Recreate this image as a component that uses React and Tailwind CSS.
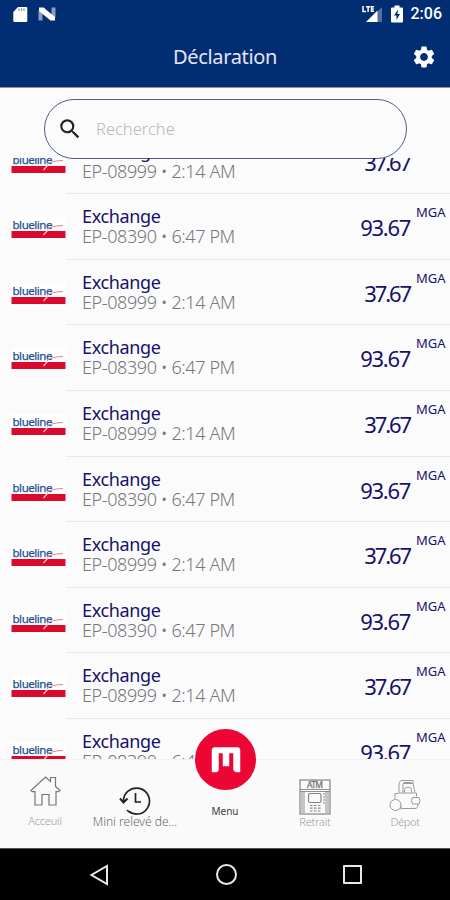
import { MdSettings, MdSearch } from "react-icons/md";

const code390 = { ref: "EP-08390 • 6:47 PM", amount: "93.67", tracking: "tracking-[-1.300px]" };
const code999 = { ref: "EP-08999 • 2:14 AM", amount: "37.67", tracking: "tracking-[-2.100px]" };

const transactions = [
  code999, code390, code999, code390, code999,
  code390, code999, code390, code999, code390,
];

function StatusBar() {
  return (
    <div className="flex h-[28px] items-center justify-between pl-[13px] pr-[8px]">
      <div className="flex items-center gap-[10px]">
        {/* SD card */}
        <svg className="h-[17px] w-[15px]" viewBox="0 0 15 17">
          <path d="M5 1h8q1.300 0 1.300 1.300v12.400q0 1.300-1.300 1.300H1.500Q0.300 16 0.300 14.700V6z" fill="#fff" />
          <path d="M6 2.500v2.500M8.500 2.500v2.500M11 2.500v2.500" stroke="#7f8fb8" strokeWidth="1.200" />
        </svg>
        <svg className="h-[14px] w-[18px]" viewBox="0 0 18 14">
          <path d="M0.500 3.500L4.500 6v7.500h-4zM13.500 0.500h4v10l-4-2.500z" fill="#8d9cc2" />
          <path d="M1 0.500h4.500L17 10v3.500h-4.500L1 4z" fill="#fff" />
        </svg>
      </div>
      <div className="flex items-center">
        <svg className="mr-[8px] h-[18px] w-[21px]" viewBox="0 0 21 18">
          <path d="M20 2v15h-5V7z" fill="#54709f" />
          <path d="M15.500 5.500V17H4z" fill="#fff" />
          <path d="M1 1v5.500h3M4 1.700h4.200M6.100 1.700v5.300M12 1.700H9.500v4.600H12M9.500 4h2.300" stroke="#fff" strokeWidth="1.500" fill="none" />
        </svg>
        <svg className="mr-[8px] h-[18px] w-[12px]" viewBox="0 0 12 18">
          <path d="M3.500 0.500h5v2h2.500q1 0 1 1V16.500q0 1-1 1H1q-1 0-1-1V3.500q0-1 1-1h2.500z" fill="#fff" />
          <path d="M7 4.500L3 10.500h2.500V15L9 9H6.500z" fill="#012d73" />
        </svg>
        <span className="font-[Roboto] text-[16px] leading-none font-medium text-white">2:06</span>
      </div>
    </div>
  );
}

function Header() {
  return (
    <header className="h-[88px] shrink-0 border-b border-[#8d94bd] bg-[#012d73]">
      <StatusBar />
      <div className="grid h-[57px] grid-cols-[60px_1fr_60px] items-center">
        <h1 className="col-start-2 text-center text-[20px] leading-none tracking-[-0.350px] text-[#e6e4f3]">Déclaration</h1>
        <MdSettings className="ml-[21px] size-[26px] text-white" />
      </div>
    </header>
  );
}

function BluelineLogo() {
  return (
    <svg className="mt-[23px] h-[22px] w-[55px] shrink-0" viewBox="0 0 55 22">
      <rect width="55" height="22" fill="#fff" />
      <text x="1.500" y="12.300" fontSize="11.500" textLength="40" fill="#24508f" stroke="#24508f" strokeWidth="0.250">
        blueline
      </text>
      <rect x="0.500" y="14" width="54" height="7" fill="#d90a2b" />
      <path d="M36 12.500Q40 8.800 52 8.500" stroke="#e4808d" strokeWidth="1" fill="none" />
      <path d="M32.500 18l4-4.500" stroke="#f7c5cc" strokeWidth="1.200" />
    </svg>
  );
}

function TransactionRow({ item }) {
  return (
    <div className="flex h-[65.600px] shrink-0 pl-[11px]">
      <BluelineLogo />
      <div className="flex flex-1 border-b border-[#e9e9eb] pl-[16px]">
        <div className="flex-1 pt-[12px]">
          <p className="text-[18px] leading-[20px] tracking-[-0.350px] text-[#17126b]">Exchange</p>
          <p className="text-[18px] leading-[20px] font-light tracking-[-0.400px] whitespace-nowrap text-[#77777c]">{item.ref}</p>
        </div>
        <span className={`pt-[21px] text-[22px] leading-[24px] text-[#17126b] ${item.tracking}`}>{item.amount}</span>
        <span className="w-[40px] pt-[10px] pl-[6px] text-[13px] leading-[16px] text-[#17126b]">MGA</span>
      </div>
    </div>
  );
}

function SearchBar() {
  return (
    <div className="mt-[11px] ml-[44px] flex h-[60px] w-[363px] shrink-0 items-center rounded-full border border-[#505a8f] bg-[#fbfbfb] pl-[12px]">
      <MdSearch className="size-[26px] text-[#222]" />
      <span className="ml-[13px] text-[16.500px] leading-none font-light text-[#b9b9bc]">Recherche</span>
    </div>
  );
}

function HomeIcon() {
  return (
    <svg className="h-[30px] w-[31px]" viewBox="0 0 31 30" fill="none" stroke="#77777a" strokeWidth="1.200">
      <path d="M1 14.500L15.500 1l5 4.500V1.500h5v9l4.500 4-1.500 1.200h-2.500V29h-7V18.500h-7V29h-7V15.700H2.300z" />
    </svg>
  );
}

function HistoryIcon() {
  return (
    <svg className="h-[30px] w-[32px]" viewBox="0 0 32 30" fill="none" stroke="#222" strokeWidth="1.700">
      <path d="M4.500 16A13 13 0 1 1 8 24M10 25.500A13 13 0 0 0 18 28" />
      <path d="M1 12.500l3.500 4 4-4" strokeWidth="2" />
      <path d="M16.500 7v9h5.500" />
    </svg>
  );
}

function AtmIcon() {
  return (
    <svg className="h-[36px] w-[32px]" viewBox="0 0 32 36" fill="none" stroke="#858588" strokeWidth="1.200">
      <rect x="1" y="1" width="30" height="34" />
      <path d="M1 10.500h30M1 12.500h30M5 12.500V34M27 12.500V34M3 12.500V34M29 12.500V34" strokeWidth="0.900" />
      <rect x="9.500" y="14.500" width="12.500" height="9" rx="1.500" />
      <path d="M24 15h2M24 18h2M24 21h2M24 24h2" />
      <path d="M11 26.500h2.500M15 26.500h2.500M19 26.500h2.500M11 29.200h2.500M15 29.200h2.500M19 29.200h2.500M11 32h2.500M15 32h2.500M19 32h2.500" />
      <text x="8" y="9.200" fontSize="8.500" textLength="16" fill="#777" stroke="#777" strokeWidth="0.300">ATM</text>
    </svg>
  );
}

function DepositIcon() {
  return (
    <svg className="h-[33px] w-[32px]" viewBox="0 0 32 33" fill="none" stroke="#9a9a9d" strokeWidth="1">
      <path d="M12 1.500h12v3h-10v9M12 1.500L10 4v9.500M14.500 3.500h8M24 4.500l2 9" />
      <path d="M15.500 13.500V10.500q0-2 2-2h3q2 0 2 2v3M9 14h18.500M6 20v-5.500h3M27.500 14v3.500" />
      <circle cx="6.500" cy="26" r="5.500" />
      <path d="M23.500 18.500h6.500l1 3-1 3.500h-6.500l-1-3.500z" />
      <path d="M12 29.500h14q3 0 3-4.500M12 26.500v4" />
    </svg>
  );
}

function MenuMark() {
  return (
    <svg className="h-[26px] w-[30px]" viewBox="0 0 30 26">
      <path
        d="M1 25V3q0-2.500 2.500-2.500h23q2.500 0 2.500 2.500v22h-4.500L22.500 23V6h-4.500v13h-6V6H7.500v17L6 25z"
        fill="#fff"
        stroke="#fff"
        strokeWidth="0.500"
      />
    </svg>
  );
}

function TabBar() {
  return (
    <nav className="relative grid h-[89px] shrink-0 grid-cols-5 border-t border-[#f2f2f3] bg-[#fafafa] text-center leading-none">
      <div className="flex flex-col items-center pt-[16px]">
        <HomeIcon />
        <span className="mt-[9px] text-[11px] font-light tracking-[-0.200px] text-[#9b9b9e]">Acceuil</span>
      </div>
      <div className="flex flex-col items-center pt-[26px]">
        <HistoryIcon />
        <span className="text-[12px] font-light whitespace-nowrap text-[#68686b]">Mini relevé de...</span>
      </div>
      <div className="flex flex-col items-center pt-[46px]">
        <span className="text-[10px] text-[#3c3c3f]">Menu</span>
      </div>
      <div className="flex flex-col items-center pt-[19px]">
        <AtmIcon />
        <span className="mt-px text-[11px] font-light tracking-[-0.200px] text-[#9b9b9e]">Retrait</span>
      </div>
      <div className="flex flex-col items-center pt-[19px]">
        <DepositIcon />
        <span className="mt-[4px] text-[11px] font-light tracking-[-0.300px] text-[#9b9b9e]">Dépot</span>
      </div>
      {/* floating menu button */}
      <button className="absolute top-[-31px] left-[195px] flex size-[61px] items-center justify-center rounded-full bg-[#eb0634]">
        <MenuMark />
      </button>
    </nav>
  );
}

function SystemNav() {
  return (
    <div className="flex h-[52px] shrink-0 items-center justify-between border-t border-[#555] bg-black pr-[88px] pl-[89px]">
      <svg className="h-[22px] w-[20px]" viewBox="0 0 20 22" fill="none" stroke="#e8e8e8" strokeWidth="2">
        <path d="M18 2v18L2.500 11z" />
      </svg>
      <div className="size-[21px] rounded-full border-2 border-[#e8e8e8]" />
      <div className="size-[19px] rounded-[1px] border-2 border-[#e8e8e8]" />
    </div>
  );
}

export default function App() {
  return (
    <div className="flex h-[900px] w-[450px] flex-col overflow-hidden bg-[#fbfbfc] font-['Noto_Sans',sans-serif]">
      <Header />
      <SearchBar />
      <main className="-mt-px flex h-[601px] shrink-0 flex-col overflow-hidden">
        <div className="-mt-[29.300px] flex flex-col">
          {transactions.map((item, i) => (
            <TransactionRow key={i} item={item} />
          ))}
        </div>
      </main>
      <TabBar />
      <SystemNav />
    </div>
  );
}
